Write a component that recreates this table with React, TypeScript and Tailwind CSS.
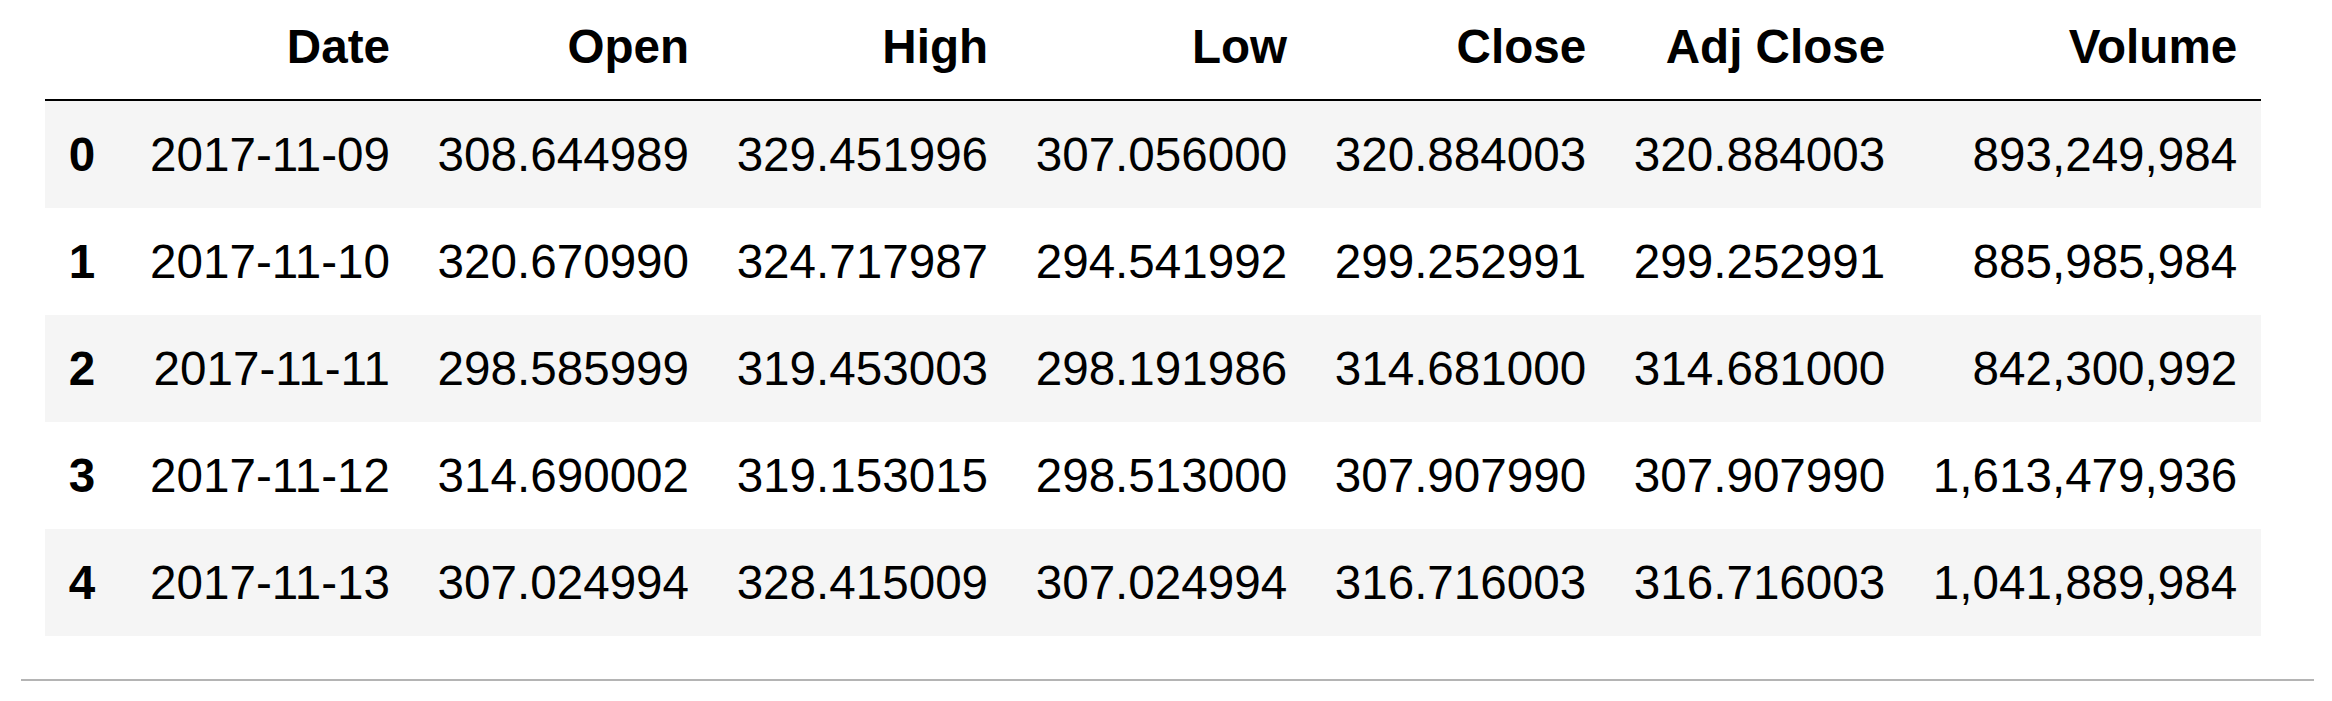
import React from "react";

type Row = {
  id: number;
  date: string;
  open: string;
  high: string;
  low: string;
  close: string;
  adjClose: string;
  volume: string;
};

const columns = ["Date", "Open", "High", "Low", "Close", "Adj Close", "Volume"];

const rows: Row[] = [
  { id: 0, date: "2017-11-09", open: "308.644989", high: "329.451996", low: "307.056000", close: "320.884003", adjClose: "320.884003", volume: "893,249,984" },
  { id: 1, date: "2017-11-10", open: "320.670990", high: "324.717987", low: "294.541992", close: "299.252991", adjClose: "299.252991", volume: "885,985,984" },
  { id: 2, date: "2017-11-11", open: "298.585999", high: "319.453003", low: "298.191986", close: "314.681000", adjClose: "314.681000", volume: "842,300,992" },
  { id: 3, date: "2017-11-12", open: "314.690002", high: "319.153015", low: "298.513000", close: "307.907990", adjClose: "307.907990", volume: "1,613,479,936" },
  { id: 4, date: "2017-11-13", open: "307.024994", high: "328.415009", low: "307.024994", close: "316.716003", adjClose: "316.716003", volume: "1,041,889,984" },
];

const App: React.FC = () => {
  return (
    <div className="min-h-[701px] w-full bg-white pl-[21px] pr-[18px] font-['Liberation_Sans',Helvetica,Arial,sans-serif] text-[47.6px] text-black">
      <table className="ml-[24px] border-collapse border-spacing-0 whitespace-nowrap">
        <thead>
          <tr className="border-b-2 border-black">
            <th className="pl-[0.5em] pr-[31px] pt-[19px] pb-[25px] leading-[55px]"></th>
            {columns.map((col) => (
              <th key={col} className="px-[0.5em] pt-[19px] pb-[25px] text-right font-bold leading-[55px]">
                {col}
              </th>
            ))}
          </tr>
        </thead>
        <tbody>
          {rows.map((row) => (
            <tr key={row.id} className={row.id % 2 === 0 ? "bg-[#f5f5f5]" : "bg-white"}>
              <th className="pl-[0.5em] pr-[31px] py-[24px] text-left font-bold leading-[59px]">{row.id}</th>
              <td className="px-[0.5em] py-[24px] text-right leading-[59px]">{row.date}</td>
              <td className="px-[0.5em] py-[24px] text-right leading-[59px]">{row.open}</td>
              <td className="px-[0.5em] py-[24px] text-right leading-[59px]">{row.high}</td>
              <td className="px-[0.5em] py-[24px] text-right leading-[59px]">{row.low}</td>
              <td className="px-[0.5em] py-[24px] text-right leading-[59px]">{row.close}</td>
              <td className="px-[0.5em] py-[24px] text-right leading-[59px]">{row.adjClose}</td>
              <td className="px-[0.5em] py-[24px] text-right leading-[59px]">{row.volume}</td>
            </tr>
          ))}
        </tbody>
      </table>
      <div className="mt-[43px] h-[2px] bg-[#b4b4b4]" />
    </div>
  );
};

export default App;
